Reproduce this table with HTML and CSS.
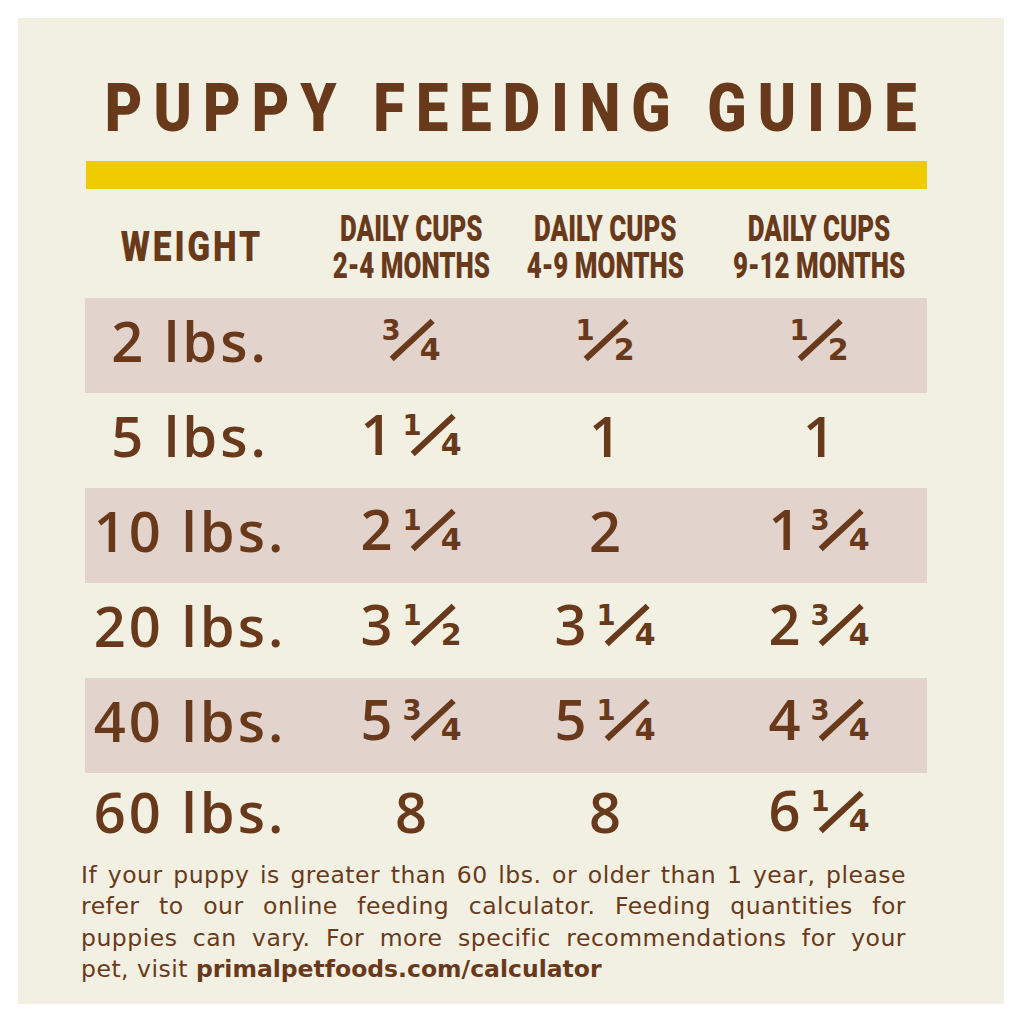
FILE: index.html
```html
<!DOCTYPE html>
<html lang="en">
<head>
<meta charset="utf-8">
<title>Puppy Feeding Guide</title>
<link rel="stylesheet" href="styles.css">
</head>
<body>
<div class="panel">
  <h1 class="title"><span class="title-text">PUPPY FEEDING GUIDE</span></h1>
  <div class="bar"></div>
  <div class="head">
    <div class="hcell"><span class="weight-h">WEIGHT</span></div>
    <div class="hcell"><span class="hd">DAILY CUPS<br>2-4 MONTHS</span></div>
    <div class="hcell"><span class="hd">DAILY CUPS<br>4-9 MONTHS</span></div>
    <div class="hcell"><span class="hd">DAILY CUPS<br>9-12 MONTHS</span></div>
  </div>

  <div class="row shade">
    <div class="cell wt">2 lbs.</div>
    <div class="cell"><span class="frac solo"><span class="num">3</span><span class="sl"></span><span class="den">4</span></span></div>
    <div class="cell"><span class="frac solo"><span class="num">1</span><span class="sl"></span><span class="den">2</span></span></div>
    <div class="cell"><span class="frac solo"><span class="num">1</span><span class="sl"></span><span class="den">2</span></span></div>
  </div>
  <div class="row">
    <div class="cell wt">5 lbs.</div>
    <div class="cell">1<span class="frac"><span class="num">1</span><span class="sl"></span><span class="den">4</span></span></div>
    <div class="cell">1</div>
    <div class="cell">1</div>
  </div>
  <div class="row shade">
    <div class="cell wt">10 lbs.</div>
    <div class="cell">2<span class="frac"><span class="num">1</span><span class="sl"></span><span class="den">4</span></span></div>
    <div class="cell">2</div>
    <div class="cell">1<span class="frac"><span class="num">3</span><span class="sl"></span><span class="den">4</span></span></div>
  </div>
  <div class="row">
    <div class="cell wt">20 lbs.</div>
    <div class="cell">3<span class="frac"><span class="num">1</span><span class="sl"></span><span class="den">2</span></span></div>
    <div class="cell">3<span class="frac"><span class="num">1</span><span class="sl"></span><span class="den">4</span></span></div>
    <div class="cell">2<span class="frac"><span class="num">3</span><span class="sl"></span><span class="den">4</span></span></div>
  </div>
  <div class="row shade">
    <div class="cell wt">40 lbs.</div>
    <div class="cell">5<span class="frac"><span class="num">3</span><span class="sl"></span><span class="den">4</span></span></div>
    <div class="cell">5<span class="frac"><span class="num">1</span><span class="sl"></span><span class="den">4</span></span></div>
    <div class="cell">4<span class="frac"><span class="num">3</span><span class="sl"></span><span class="den">4</span></span></div>
  </div>
  <div class="row last">
    <div class="cell wt">60 lbs.</div>
    <div class="cell">8</div>
    <div class="cell">8</div>
    <div class="cell">6<span class="frac"><span class="num">1</span><span class="sl"></span><span class="den">4</span></span></div>
  </div>

  <div class="note">
    <span class="line">If your puppy is greater than 60 lbs. or older than 1 year, please</span>
    <span class="line">refer to our online feeding calculator. Feeding quantities for</span>
    <span class="line">puppies can vary. For more specific recommendations for your</span>
    <span class="line end">pet, visit <b class="url">primalpetfoods.com/calculator</b></span>
  </div>
</div>
</body>
</html>
```

FILE: styles.css
```css
html, body {
  margin: 0;
  padding: 0;
  background: #ffffff;
}

body {
  width: 1024px;
  height: 1024px;
  overflow: hidden;
  color: #683a1b;
}

.panel {
  box-sizing: border-box;
  margin: 18px 0 0 18px;
  width: 986px;
  height: 986px;
  background: #f2f0e2;
  padding: 56px 77px 0 67px;
}

.title {
  display: flex;
  justify-content: center;
  margin: 0 0 0 7px;
  height: 67.5px;
  font-family: Roboto, "Liberation Sans", sans-serif;
  font-weight: 900;
  font-size: 67.5px;
  line-height: 67.5px;
  white-space: nowrap;
}

.title-text {
  display: inline-block;
  flex: none;
  letter-spacing: 13px;
  margin-right: -13px;
  transform: scaleX(0.855);
}

.bar {
  margin: 19.5px 0 0 1px;
  height: 28px;
  background: #efcc00;
}

.head {
  display: grid;
  grid-template-columns: 210px 232px 156px 272px;
  align-items: center;
  height: 74px;
  margin: 21px 0 14px;
  font-family: Roboto, "Liberation Sans", sans-serif;
  font-weight: 900;
  text-align: center;
  white-space: nowrap;
}

.hcell {
  display: flex;
  justify-content: center;
}

.hd {
  display: inline-block;
  font-size: 37px;
  line-height: 37px;
  transform: scaleX(0.7);
}

.weight-h {
  display: inline-block;
  font-size: 42px;
  line-height: 42px;
  letter-spacing: 3.5px;
  margin-right: -3.5px;
  transform: scaleX(0.8);
}

.row {
  display: grid;
  grid-template-columns: 210px 232px 156px 272px;
  align-items: center;
  width: 842px;
  height: 95px;
  font-family: "Open Sans", "DejaVu Sans", sans-serif;
  font-weight: 600;
  font-size: 56px;
  line-height: 56px;
  white-space: nowrap;
}

.row.shade {
  background: #e2d3cc;
}

.row.last {
  height: 69px;
}

.cell {
  text-align: center;
  padding-bottom: 12px;
}

.cell.wt {
  letter-spacing: 3px;
}

.frac {
  margin-left: 10px;
}

.frac.solo {
  margin-left: 0;
}

.num,
.den {
  font-family: "DejaVu Sans", sans-serif;
  font-weight: 700;
  letter-spacing: 0;
}

.num {
  font-size: 27.5px;
  vertical-align: 20px;
}

.den {
  font-size: 30px;
}

.sl {
  display: inline-block;
  width: 56px;
  height: 5.5px;
  background: #683a1b;
  vertical-align: 17px;
  margin: 0 -20px 0 -17px;
  transform: rotate(-43deg);
}

.note {
  margin: 18px 0 0 -4px;
  width: 825px;
  font-family: "DejaVu Sans", sans-serif;
  font-weight: 400;
  font-size: 23.5px;
  line-height: 31.3px;
  letter-spacing: 0.5px;
}

.line {
  display: block;
  white-space: nowrap;
  text-align: justify;
  text-align-last: justify;
}

.line.end {
  text-align-last: left;
}

.url {
  font-weight: 700;
  letter-spacing: 0;
}
```
